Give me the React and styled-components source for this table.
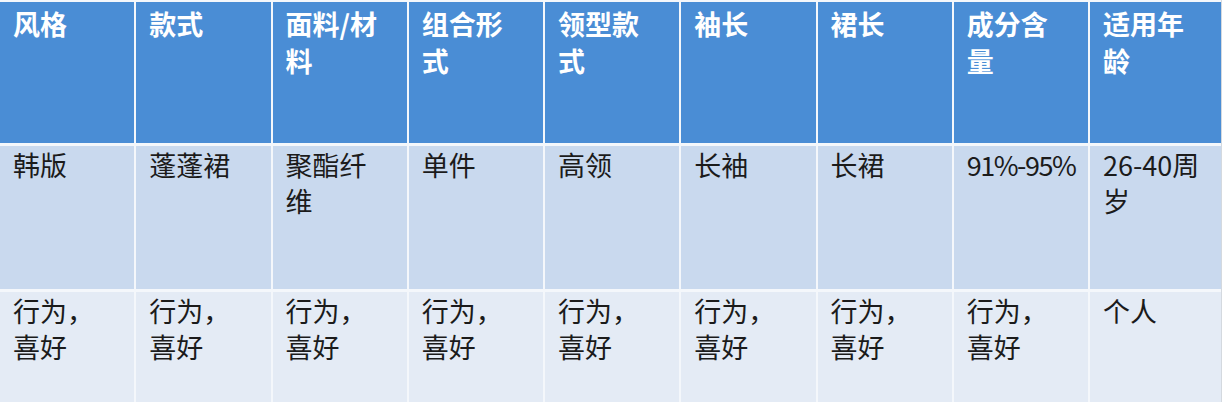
import React from "react";
import styled, { createGlobalStyle } from "styled-components";

const Global = createGlobalStyle`
  html, body { margin: 0; padding: 0; background: #ffffff; }
  body { overflow: hidden; font-family: "Noto Sans CJK SC", "Noto Sans", sans-serif; }
`;

const Table = styled.div`
  display: grid;
  grid-template-columns: repeat(8, 134.25px) 1fr;
  grid-template-rows: 141px 143px 111px;
  column-gap: 2px;
  row-gap: 3px;
  padding-top: 2px;
  width: 1222px;
  height: 402px;
  box-sizing: border-box;
  background: #f4f7fb;
  border-right: 1px solid #d4d9df;
`;

const Cell = styled.div`
  background: ${(p) => p.$bg};
  color: ${(p) => (p.$head ? "#ffffff" : "#1b1b1b")};
  font-weight: ${(p) => (p.$head ? 700 : 400)};
  font-size: 27px;
  line-height: ${(p) => (p.$head ? "37px" : "36px")};
  padding: ${(p) => (p.$head ? "3px 10px 0 13px" : "1px 10px 0 13px")};
  box-sizing: border-box;
  overflow: hidden;
`;

const Line = styled.div`
  white-space: nowrap;
  letter-spacing: ${(p) => (p.$tight ? "-1.5px" : "0")};
`;

const rows = [
  {
    head: true,
    bg: "#4a8dd5",
    cells: [["风格"], ["款式"], ["面料/材", "料"], ["组合形", "式"], ["领型款", "式"], ["袖长"], ["裙长"], ["成分含", "量"], ["适用年", "龄"]],
  },
  {
    bg: "#c9d9ee",
    cells: [["韩版"], ["蓬蓬裙"], ["聚酯纤", "维"], ["单件"], ["高领"], ["长袖"], ["长裙"], ["91%-95%"], ["26-40周", "岁"]],
  },
  {
    bg: "#e4ebf5",
    cells: [
      ["行为，", "喜好"],
      ["行为，", "喜好"],
      ["行为，", "喜好"],
      ["行为，", "喜好"],
      ["行为，", "喜好"],
      ["行为，", "喜好"],
      ["行为，", "喜好"],
      ["行为，", "喜好"],
      ["个人"],
    ],
  },
];

export default function App() {
  return (
    <>
      <Global />
      <Table>
        {rows.map((row, r) =>
          row.cells.map((lines, c) => (
            <Cell key={`${r}-${c}`} $bg={row.bg} $head={row.head}>
              {lines.map((t, i) => (
                <Line key={i} $tight={t.includes("%")}>
                  {t}
                </Line>
              ))}
            </Cell>
          ))
        )}
      </Table>
    </>
  );
}
